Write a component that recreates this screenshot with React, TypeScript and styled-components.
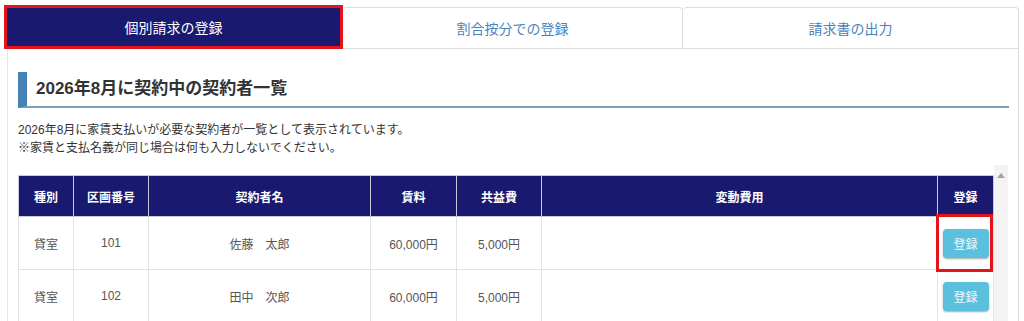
import React from "react";
import styled, { createGlobalStyle, css } from "styled-components";

const GlobalStyle = createGlobalStyle`
  html, body { margin: 0; padding: 0; background: #ffffff; }
  body {
    font-family: "Liberation Sans", "Noto Sans CJK JP", sans-serif;
    color: #333333;
    overflow: hidden;
  }
  * { box-sizing: border-box; }
`;

const NAVY = "#191970";
const ANNOT = "#e3141c";

const Page = styled.div`
  padding: 5px 5px 0 4px;
  width: 1024px;
`;

const Tabs = styled.div`
  display: grid;
  grid-template-columns: 339px 340px 1fr;
  align-items: end;
  height: 44px;
`;

const Tab = styled.div<{ $active?: boolean }>`
  display: flex;
  align-items: center;
  justify-content: center;
  font-size: 14px;
  ${(p) =>
    p.$active
      ? css`
          height: 44px;
          background: ${NAVY};
          color: #ffffff;
          border: 3px solid ${ANNOT};
        `
      : css`
          height: 42px;
          background: #ffffff;
          color: #4a84bd;
          border: 1px solid #dcdcdc;
          border-radius: 4px 4px 0 0;
          & + & {
            border-left: none;
          }
        `}
`;

const Panel = styled.div`
  margin-left: 3px;
  border-left: 1px solid #e2e6ee;
  border-right: 1px solid #dddddd;
  padding: 23px 9px 0 10px;
  height: 280px;
`;

const Heading = styled.h2`
  margin: 0;
  height: 36px;
  border-left: 9px solid #4682b4;
  border-bottom: 2px solid #7fa0b2;
  padding-left: 9px;
  font-size: 17px;
  font-weight: bold;
  line-height: 34px;
  color: #333333;
`;

const Lead = styled.p`
  margin: 13px 0 0;
  font-size: 12px;
  line-height: 18px;
  color: #333333;
`;

const ScrollArea = styled.div`
  margin-top: 8px;
  display: flex;
  gap: 1px;
`;

const TableWrap = styled.div`
  padding-top: 10px;
  width: 975px;
`;

const ScrollTrack = styled.div`
  width: 14px;
  background: #f3f3f3;
  display: flex;
  justify-content: center;
  padding-top: 8px;
  height: 160px;
`;

const ArrowUp = styled.div`
  width: 0;
  height: 0;
  border-left: 4px solid transparent;
  border-right: 4px solid transparent;
  border-bottom: 5px solid #a3a3a3;
`;

const Table = styled.table`
  width: 975px;
  border-collapse: collapse;
  table-layout: fixed;
`;

const Th = styled.th`
  height: 41px;
  background: ${NAVY};
  color: #ffffff;
  font-size: 12px;
  font-weight: bold;
  text-align: center;
  border: 1px solid #c9cad8;
  padding: 0;
`;

const Td = styled.td<{ $mark?: boolean }>`
  height: 53px;
  font-size: 12px;
  color: #555555;
  text-align: center;
  border: 1px solid #e3e3e3;
  padding: 0;
  position: relative;
  ${(p) =>
    p.$mark &&
    css`
      &::after {
        content: "";
        position: absolute;
        top: -3px;
        bottom: -3px;
        left: -2px;
        right: 0;
        border: 3px solid ${ANNOT};
        pointer-events: none;
      }
    `}
`;

const RegisterButton = styled.button`
  width: 46px;
  height: 29px;
  border: none;
  border-radius: 4px;
  background: #5bc0de;
  color: #eef9fc;
  font-family: inherit;
  font-size: 12px;
  box-shadow: 0 1px 2px rgba(0, 0, 0, 0.35);
  padding: 0;
  cursor: pointer;
`;

const cols = [55, 75, 222, 86, 85, 396, 56];
const headers = ["種別", "区画番号", "契約者名", "賃料", "共益費", "変動費用", "登録"];

const rows = [
  { kind: "貸室", no: "101", name: "佐藤　太郎", rent: "60,000円", fee: "5,000円" },
  { kind: "貸室", no: "102", name: "田中　次郎", rent: "60,000円", fee: "5,000円" },
];

export default function App() {
  return (
    <>
      <GlobalStyle />
      <Page>
        <Tabs>
          <Tab $active>個別請求の登録</Tab>
          <Tab>割合按分での登録</Tab>
          <Tab>請求書の出力</Tab>
        </Tabs>
        <Panel>
          <Heading>2026年8月に契約中の契約者一覧</Heading>
          <Lead>
            2026年8月に家賃支払いが必要な契約者が一覧として表示されています。
            <br />
            ※家賃と支払名義が同じ場合は何も入力しないでください。
          </Lead>
          <ScrollArea>
            <TableWrap>
              <Table>
                <colgroup>
                  {cols.map((w, i) => (
                    <col key={i} style={{ width: w }} />
                  ))}
                </colgroup>
                <thead>
                  <tr>
                    {headers.map((h) => (
                      <Th key={h}>{h}</Th>
                    ))}
                  </tr>
                </thead>
                <tbody>
                  {rows.map((r, i) => (
                    <tr key={r.no}>
                      <Td>{r.kind}</Td>
                      <Td>{r.no}</Td>
                      <Td>{r.name}</Td>
                      <Td>{r.rent}</Td>
                      <Td>{r.fee}</Td>
                      <Td></Td>
                      <Td $mark={i === 0}>
                        <RegisterButton>登録</RegisterButton>
                      </Td>
                    </tr>
                  ))}
                </tbody>
              </Table>
            </TableWrap>
            <ScrollTrack>
              <ArrowUp />
            </ScrollTrack>
          </ScrollArea>
        </Panel>
      </Page>
    </>
  );
}
